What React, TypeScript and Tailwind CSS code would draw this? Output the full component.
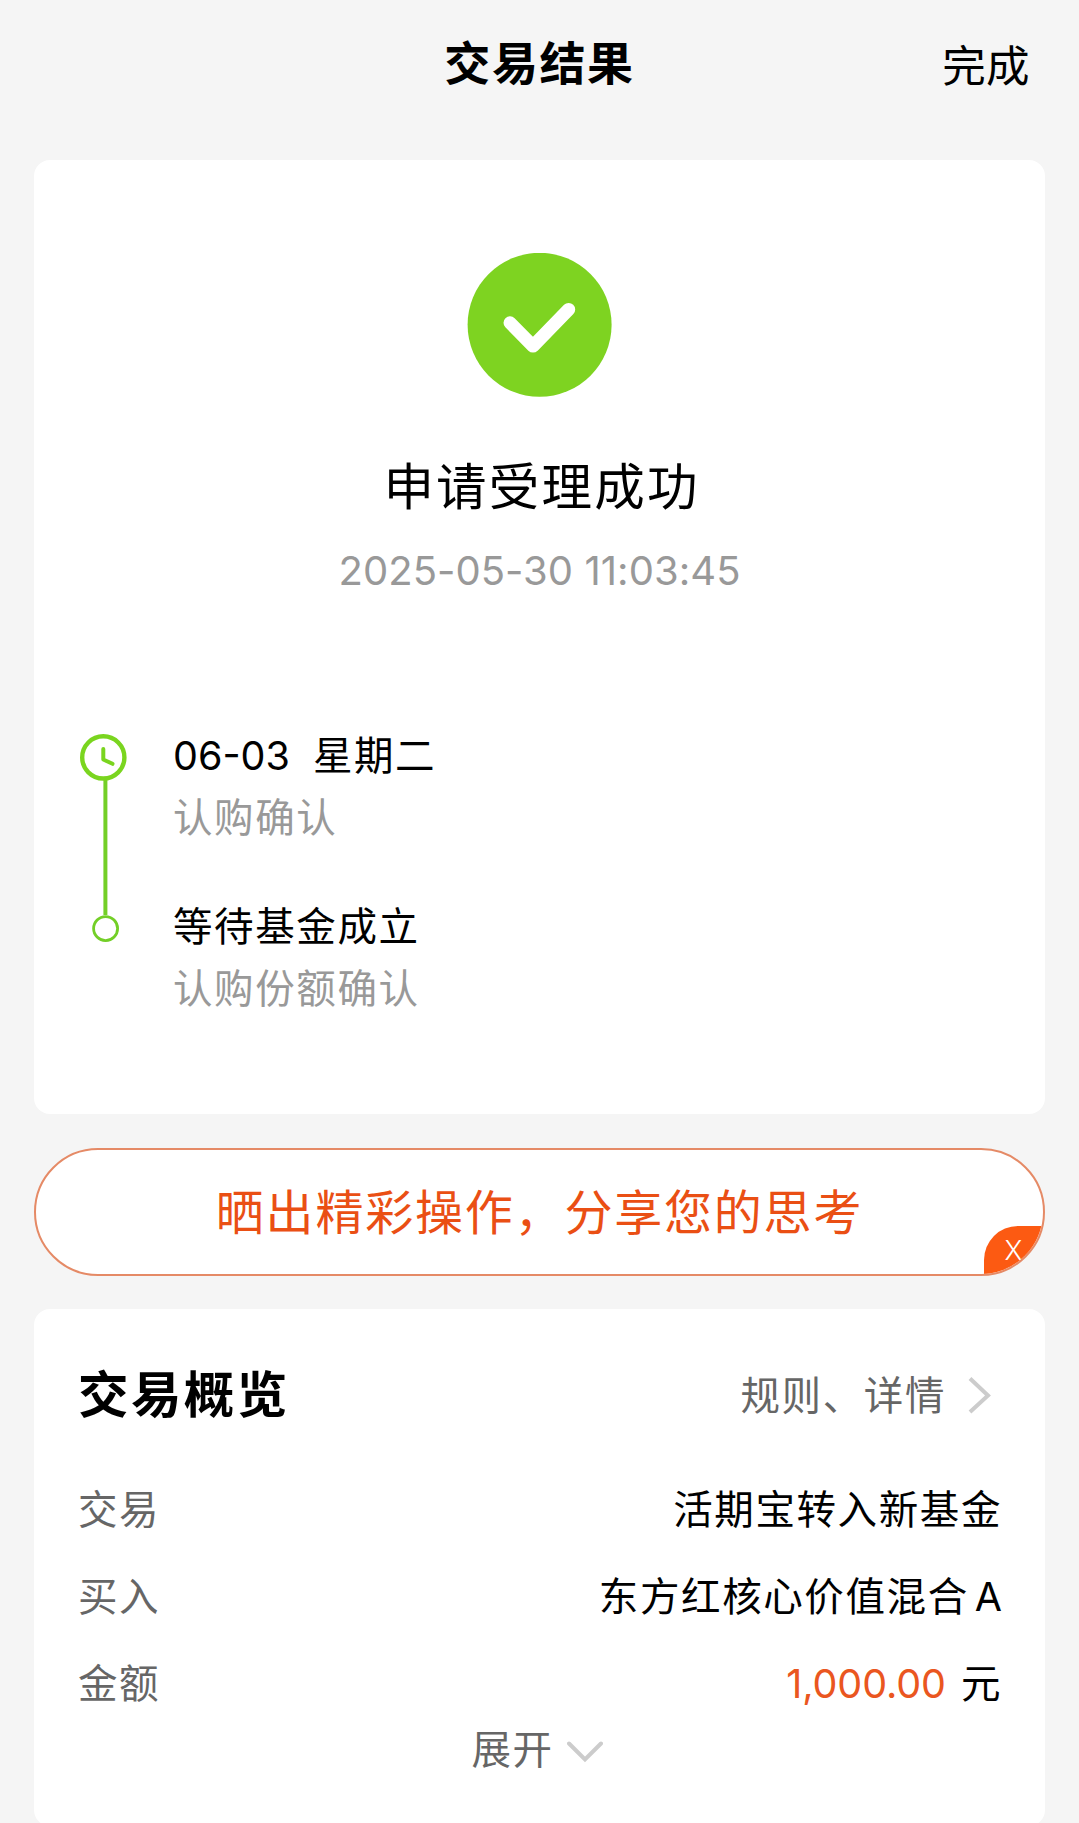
const steps = [
  { date: "06-03", title: "星期二", note: "认购确认" },
  { date: "", title: "等待基金成立", note: "认购份额确认" },
];

function Header() {
  return (
    <header className="grid h-40 grid-cols-3 items-start px-[49px] pt-[35px]">
      <span />
      <h1 className="text-center text-[46px] leading-[56px] font-bold tracking-[1.6px] whitespace-nowrap">
        交易结果
      </h1>
      <button className="justify-self-end pt-[3px] text-[43.5px] leading-[56px] tracking-[0.4px]">完成</button>
    </header>
  );
}

function SuccessIcon() {
  return (
    <svg className="size-[145px]" viewBox="0 0 145 145" fill="none">
      <circle cx="72.6" cy="71.8" r="72" fill="#7ed321" />
      <path
        d="M43 69.8 66 93.1 101.7 56.4"
        stroke="#fff"
        strokeWidth="13"
        strokeLinecap="round"
        strokeLinejoin="round"
      />
    </svg>
  );
}

function TimelineRail() {
  return (
    <svg className="-mt-0.5 h-[222px] w-12 shrink-0" viewBox="0 0 48 222" fill="none" stroke="#73cf27">
      <path d="M25.4 57V192" strokeWidth="4" />
      <circle cx="23.3" cy="34.4" r="21.1" stroke="#7ad51f" strokeWidth="4.4" />
      <path d="M23.3 26V36.5L32.5 40.8" stroke="#7ad51f" strokeWidth="4" strokeLinecap="round" strokeLinejoin="round" />
      <circle cx="25.6" cy="205.6" r="12" strokeWidth="2.8" />
    </svg>
  );
}

function ResultCard() {
  return (
    <section className="flex h-[954px] flex-col items-center rounded-2xl bg-white pt-[93px]">
      <SuccessIcon />
      <h2 className="mt-[59px] pl-1 text-[50.5px] leading-[60px] tracking-[2.2px]">申请受理成功</h2>
      <p className="mt-[29px] text-[40px] leading-[50px] tracking-[0.05px] text-[#999]">2025-05-30 11:03:45</p>
      <div className="mt-[129px] flex w-full gap-[45px] pl-[46px]">
        <TimelineRail />
        <ul className="flex flex-col gap-[47px] text-[39.5px] leading-[62px] tracking-[1.6px]">
          {steps.map((s) => (
            <li key={s.title}>
              <p>
                {s.date && <span className="mr-[23px] tracking-normal">{s.date}</span>}
                {s.title}
              </p>
              <p className="text-[#999]">{s.note}</p>
            </li>
          ))}
        </ul>
      </div>
    </section>
  );
}

function ShareBanner() {
  return (
    <section className="relative mt-[34px] flex h-32 items-center justify-center overflow-hidden rounded-full border-2 border-[#e58a66] bg-white">
      <p className="pt-0.5 text-[48px] leading-[60px] tracking-[1.8px] text-[#ea4f14]">晒出精彩操作，分享您的思考</p>
      <button className="absolute right-0 bottom-0 h-12 w-[59px] rounded-tl-[34px] bg-[#fc5a12] text-center text-[27px] leading-[47px] font-light text-white">
        X
      </button>
    </section>
  );
}

function Row({ label, children }: { label: string; children: React.ReactNode }) {
  return (
    <div className="flex h-[87px] items-center justify-between">
      <dt className="text-[#666]">{label}</dt>
      <dd>{children}</dd>
    </div>
  );
}

function OverviewCard() {
  return (
    <section className="mt-[33px] h-[517px] rounded-2xl bg-white pr-[43px] pl-[44px] text-[39.5px] tracking-[1.6px]">
      <div className="flex h-[158px] items-start justify-between pt-[55px]">
        <h2 className="pt-px text-[50.5px] leading-[60px] font-bold tracking-[2.4px]">交易概览</h2>
        <button className="flex items-center gap-[22px] pt-0.5 pr-[10px] leading-[60px] text-[#666]">
          规则、详情
          <svg className="-mt-0.5 h-10 w-6" viewBox="0 0 24 40" fill="none">
            <path d="M2 3.5 20 20.5 2 37" stroke="#ccc" strokeWidth="4" />
          </svg>
        </button>
      </div>
      <dl>
        <Row label="交易">活期宝转入新基金</Row>
        <Row label="买入">
          东方红核心价值混合<span className="ml-[6px] tracking-normal">A</span>
        </Row>
        <Row label="金额">
          <span className="mr-[15px] tracking-[-0.1px] text-[#ea5620]">1,000.00</span>元
        </Row>
      </dl>
      <button className="mx-auto flex items-center gap-[13px] pr-[6px] leading-[45px] text-[#666]">
        展开
        <svg className="mt-[3px] h-6 w-9" viewBox="0 0 36 24" fill="none">
          <path d="M2 3.5 18 19.5 34 3.5" stroke="#ccc" strokeWidth="4" strokeLinecap="round" />
        </svg>
      </button>
    </section>
  );
}

export default function App() {
  return (
    <main className="h-[1823px] overflow-hidden bg-[#f5f5f5] font-['Inter','Noto_Sans_CJK_SC',sans-serif] text-black">
      <Header />
      <div className="mx-[34px]">
        <ResultCard />
        <ShareBanner />
        <OverviewCard />
      </div>
    </main>
  );
}
